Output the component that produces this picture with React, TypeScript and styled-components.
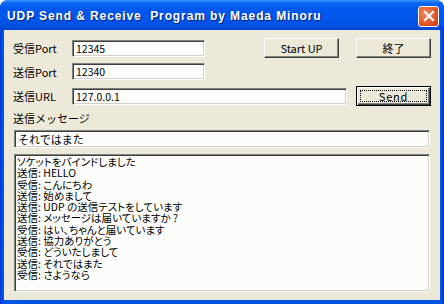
import {FC} from 'react';
import styled, {createGlobalStyle} from 'styled-components';

const GlobalStyle = createGlobalStyle`
body{
    margin:0;
    background:#ffffff;
}
`

const logLines = [
    'ソケットをバインドしました',
    '送信: HELLO',
    '受信: こんにちわ',
    '送信: 始めまして',
    '送信: UDP の送信テストをしています',
    '送信: メッセージは届いていますか ?',
    '受信: はい、ちゃんと届いています',
    '送信: 協力ありがとう',
    '受信: どういたしまして',
    '送信: それではまた',
    '受信: さようなら',
]

const App:FC = () => {
    return(
        <Window>
            <GlobalStyle/>
            <TitleBar>
                <TitleText>UDP Send &amp; Receive&nbsp; Program by Maeda Minoru</TitleText>
                <CloseButton>
                    <svg width="12" height="12" viewBox="0 0 12 12">
                        <path d="M2 2 L10 10 M10 2 L2 10" stroke="#ffffff" strokeWidth="2.2" strokeLinecap="square"/>
                    </svg>
                </CloseButton>
            </TitleBar>
            <Client>
                <Row inputHeight="20px">
                    <Label>受信Port</Label>
                    <TextBox inputWidth="133px" defaultValue="12345"/>
                    <Button inputMargin="59px">Start UP</Button>
                    <Button inputMargin="17px">終了</Button>
                </Row>
                <Row inputHeight="17px" inputTop="5px">
                    <Label>送信Port</Label>
                    <TextBox inputWidth="133px" defaultValue="12340"/>
                </Row>
                <Row inputHeight="20px" inputTop="6px">
                    <Label>送信URL</Label>
                    <TextBox inputWidth="275px" defaultValue="127.0.0.1"/>
                    <DefaultButton>
                        <FocusRect>Send</FocusRect>
                    </DefaultButton>
                </Row>
                <MessageLabel>送信メッセージ</MessageLabel>
                <MessageBox defaultValue="それではまた"/>
                <LogBox>
                    {logLines.map((line, i) => (
                        <LogLine key={i}>{line}</LogLine>
                    ))}
                </LogBox>
            </Client>
        </Window>
    )
}

type RowProps = {
    inputHeight:string
    inputTop?:string
}

type WidthProps = {
    inputWidth:string
}

type MarginProps = {
    inputMargin:string
}

const uiFont = `"MS UI Gothic", "Noto Sans CJK JP", sans-serif`

const Window = styled.div`
width:444px;
height:304px;
box-sizing:border-box;
display:flex;
flex-direction:column;
background:linear-gradient(to right, #0831d9 0px, #0054e3 2px, #0054e3 442px, #001ea0 444px);
border-radius:8px 8px 0 0;
overflow:hidden;
`

const TitleBar = styled.div`
height:30px;
flex-shrink:0;
display:flex;
align-items:center;
padding:0 5px 0 7px;
background:linear-gradient(to bottom, #3d95ff 0px, #0a65f6 3px, #0058ee 8px, #0055eb 20px, #004fe0 26px, #0043cf 30px);
`

const TitleText = styled.div`
flex:1;
padding-top:2px;
color:#ffffff;
font-family:"Liberation Sans", Arial, sans-serif;
font-weight:bold;
font-size:12px;
letter-spacing:0.9px;
white-space:pre;
text-shadow:1px 1px 0 #0a1e7a;
`

const CloseButton = styled.div`
width:21px;
height:21px;
box-sizing:border-box;
margin-top:2px;
border:1px solid #ffffff;
border-radius:3px;
background:radial-gradient(circle at 35% 35%, #f08a62 0%, #e3582c 55%, #c13c14 100%);
display:flex;
align-items:center;
justify-content:center;
`

const Client = styled.div`
flex:1;
margin:0 4px 4px 4px;
background:#ece9d8;
padding:8px 0 0 9px;
display:flex;
flex-direction:column;
font-family:${uiFont};
font-size:11px;
color:#000000;
`

const Row = styled.div<RowProps>`
display:flex;
align-items:center;
height:${(props) => props.inputHeight};
margin-top:${(props) => props.inputTop || '0'};
`

const Label = styled.span`
width:59px;
flex-shrink:0;
font-size:11px;
line-height:14px;
`

const TextBox = styled.input<WidthProps>`
width:${(props) => props.inputWidth};
height:17px;
box-sizing:border-box;
margin:0;
padding:0 0 0 3px;
border-style:solid;
border-width:1px;
border-color:#808080 #ffffff #ffffff #808080;
box-shadow:inset 1px 1px 0 #404040, inset -1px -1px 0 #d4d0c8;
background:#fcfdfa;
font-family:${uiFont};
font-size:10.5px;
color:#000000;
outline:none;
`

const Button = styled.div<MarginProps>`
width:75px;
height:20px;
box-sizing:border-box;
margin-left:${(props) => props.inputMargin};
display:flex;
align-items:center;
justify-content:center;
background:#ece9d8;
border-style:solid;
border-width:1px;
border-color:#ffffff #404040 #404040 #ffffff;
box-shadow:inset -1px -1px 0 #808080;
font-size:11px;
`

const DefaultButton = styled.div`
width:75px;
height:20px;
box-sizing:border-box;
margin-left:9px;
padding:3px;
background:#ece9d8;
border:1px solid #000000;
box-shadow:inset 1px 1px 0 #ffffff, inset -1px -1px 0 #404040, inset -2px -2px 0 #808080;
display:flex;
`

const FocusRect = styled.div`
flex:1;
display:flex;
align-items:center;
justify-content:center;
border:1px dotted #000000;
font-size:11px;
line-height:10px;
letter-spacing:0.8px;
`

const MessageLabel = styled.div`
margin-top:6px;
height:13px;
line-height:13px;
`

const MessageBox = styled.input`
width:416px;
height:18px;
box-sizing:border-box;
margin:5px 0 0 1px;
padding:0 0 0 3px;
border-style:solid;
border-width:1px;
border-color:#808080 #ffffff #ffffff #808080;
box-shadow:inset 1px 1px 0 #404040, inset -1px -1px 0 #d4d0c8;
background:#fcfdfa;
font-family:${uiFont};
font-size:11px;
color:#000000;
outline:none;
`

const LogBox = styled.div`
width:416px;
height:138px;
box-sizing:border-box;
margin:6px 0 0 1px;
padding:0 0 0 1px;
border-style:solid;
border-width:1px;
border-color:#808080 #ffffff #ffffff #808080;
box-shadow:inset 1px 1px 0 #404040, inset -1px -1px 0 #d4d0c8;
background:#fcfdfa;
overflow:hidden;
`

const LogLine = styled.div`
padding-left:1px;
font-size:10.5px;
line-height:11.3px;
height:11.3px;
white-space:pre;
font-feature-settings:"palt";
&:first-child{
    margin-top:1px;
}
`

export default App
